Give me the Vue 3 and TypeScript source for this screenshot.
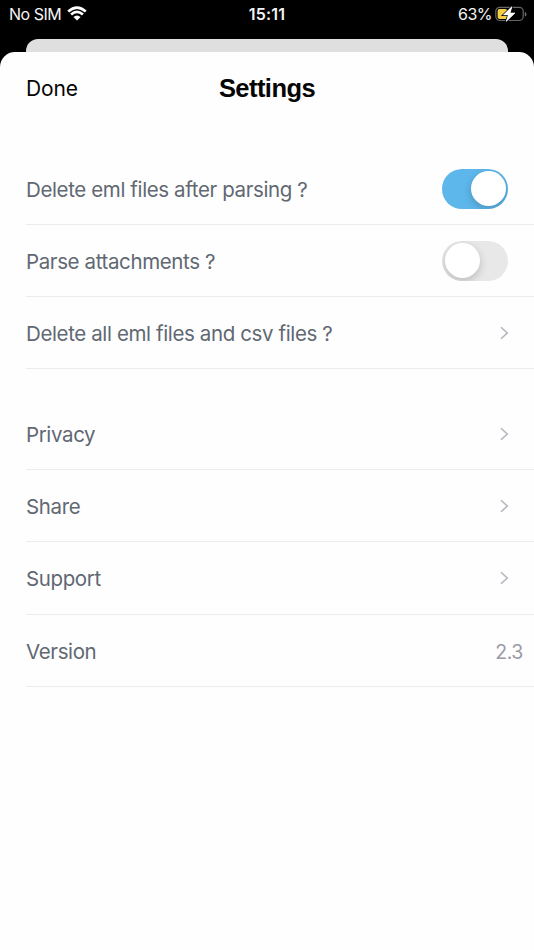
<script setup lang="ts">
import { ref } from 'vue'

interface Row {
  id: string
  label: string
  kind: 'toggle' | 'link' | 'value'
  on?: boolean
  value?: string
}

const groups = ref<Row[][]>([
  [
    { id: 'delete-after', label: 'Delete eml files after parsing ?', kind: 'toggle', on: true },
    { id: 'attachments', label: 'Parse attachments ?', kind: 'toggle', on: false },
    { id: 'delete-all', label: 'Delete all eml files and csv files ?', kind: 'link' },
  ],
  [
    { id: 'privacy', label: 'Privacy', kind: 'link' },
    { id: 'share', label: 'Share', kind: 'link' },
    { id: 'support', label: 'Support', kind: 'link' },
    { id: 'version', label: 'Version', kind: 'value', value: '2.3' },
  ],
])
</script>

<template>
  <div class="screen">
    <header class="status">
      <div class="carrier">
        <span class="sim">No SIM</span>
        <svg class="wifi" width="20" height="15" viewBox="0 0 20 15">
          <g fill="none" stroke="#fff" stroke-width="2.7">
            <path d="M1.2 5.5Q10 -2.4 18.8 5.5" />
            <path d="M4.1 8.6Q10 3.3 15.9 8.6" />
          </g>
          <path d="M6.4 10.9Q10 7.9 13.6 10.9L10 14.5Z" fill="#fff" />
        </svg>
      </div>
      <span class="clock">15:11</span>
      <div class="power">
        <span class="percent">63%</span>
        <svg class="battery" width="32" height="18" viewBox="0 0 32 18">
          <rect x="0.8" y="2.3" width="27.4" height="13.2" rx="4" fill="none" stroke="#666" stroke-width="1.2" />
          <path d="M29.8 7v4.6q1.6-.5 1.6-2.3T29.8 7Z" fill="#777" />
          <rect x="2.6" y="4.1" width="9.6" height="9.8" rx="2" fill="#f6ce46" />
          <path d="M17 1.6 8.4 9.9h4.9l-2.1 6.6 8.8-8.6h-4.9Z" fill="#fff" stroke="#000" stroke-width="2" paint-order="stroke" />
          <path d="M17 1.6 8.4 9.9h4.9l-2.1 6.6 8.8-8.6h-4.9Z" fill="#fff" stroke="#fff" stroke-width=".5" />
        </svg>
      </div>
    </header>
    <div class="behind"></div>
    <main class="sheet">
      <nav class="bar">
        <button class="done">Done</button>
        <h1 class="title">Settings</h1>
      </nav>
      <section v-for="(rows, i) in groups" :key="i" class="group">
        <div v-for="row in rows" :key="row.id" class="row">
          <span class="label">{{ row.label }}</span>
          <button
            v-if="row.kind === 'toggle'"
            class="switch"
            :class="{ on: row.on }"
            role="switch"
            :aria-checked="row.on"
            @click="row.on = !row.on"
          >
            <span class="knob"></span>
          </button>
          <svg v-else-if="row.kind === 'link'" class="chevron" width="9" height="14" viewBox="0 0 9 14">
            <path d="M1 1.2 7.3 7 1 12.8" fill="none" stroke="#b0b3bb" stroke-width="1.5" />
          </svg>
          <span v-else class="value">{{ row.value }}</span>
        </div>
      </section>
    </main>
  </div>
</template>

<style>
body {
  margin: 0;
  background: #000;
}
</style>

<style scoped>
.screen {
  display: flex;
  flex-direction: column;
  height: 950px;
  overflow: hidden;
  background: #000;
  font-family: Inter, 'Liberation Sans', sans-serif;
}
button {
  padding: 0;
  border: 0;
  background: none;
  font: inherit;
}
.status {
  box-sizing: border-box;
  display: grid;
  grid-template-columns: 1fr auto 1fr;
  align-items: center;
  height: 27px;
  margin-bottom: 12px;
  padding: 1px 7px 0 9px;
  color: #f4f4f4;
  font-size: 16px;
  line-height: 26px;
}
.carrier,
.power {
  display: flex;
  align-items: center;
}
.carrier {
  gap: 6px;
}
.wifi {
  margin-top: -2px;
}
.battery {
  margin-top: -1px;
}
.power {
  justify-content: flex-end;
  gap: 3px;
}
.sim {
  letter-spacing: -0.5px;
}
.percent {
  letter-spacing: -0.5px;
}
.clock {
  margin-right: 2px;
  font-weight: 600;
  letter-spacing: 0.2px;
}
.behind {
  flex: none;
  height: 13px;
  margin: 0 26px;
  border-radius: 12px 12px 0 0;
  background: #dfdfdf;
}
.sheet {
  flex: 1;
  min-height: 0;
  border-radius: 15px 15px 0 0;
  background: #fefefe;
}
.bar {
  display: grid;
  grid-template-columns: 1fr auto 1fr;
  align-items: center;
  height: 72px;
  margin-bottom: 28.5px;
  padding: 0 26px;
  color: #050505;
}
.done {
  justify-self: start;
  font-size: 21px;
  letter-spacing: -0.1px;
  color: inherit;
}
.title {
  margin: 0;
  font: 700 25.5px/30px 'Liberation Sans', Arial, sans-serif;
  letter-spacing: -0.55px;
}
.group + .group {
  margin-top: 28.3px;
}
.row {
  box-sizing: border-box;
  display: flex;
  align-items: center;
  justify-content: space-between;
  height: 72.3px;
  margin-left: 26px;
  padding: 1.8px 26px 0 0;
  border-bottom: 1px solid #ececee;
}
.label {
  color: #616872;
  font-size: 20.5px;
  letter-spacing: -0.38px;
  white-space: nowrap;
}
.switch {
  box-sizing: border-box;
  display: flex;
  width: 66px;
  height: 40px;
  padding: 2px 2.5px;
  overflow: hidden;
  border-radius: 20px;
  background: #e8e8e9;
}
.switch.on {
  justify-content: flex-end;
  background: #5db7eb;
}
.knob {
  width: 35px;
  height: 35px;
  border-radius: 50%;
  background: #fff;
  box-shadow: 0 3px 8px rgba(0, 0, 0, 0.2);
}
.chevron {
  margin: -1px -1px 0 0;
}
.value {
  margin-right: -15px;
  padding-top: 1px;
  color: #989ba6;
  font-size: 19.5px;
  letter-spacing: -0.4px;
}
</style>
